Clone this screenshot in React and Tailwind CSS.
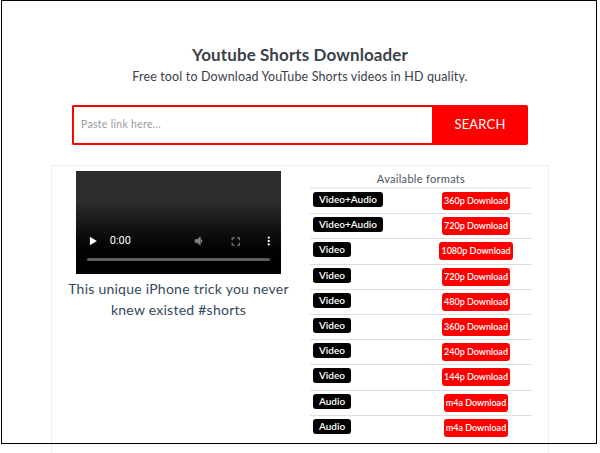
const formats = [
  { type: "Video+Audio", label: "360p Download" },
  { type: "Video+Audio", label: "720p Download" },
  { type: "Video", label: "1080p Download" },
  { type: "Video", label: "720p Download" },
  { type: "Video", label: "480p Download" },
  { type: "Video", label: "360p Download" },
  { type: "Video", label: "240p Download" },
  { type: "Video", label: "144p Download" },
  { type: "Audio", label: "m4a Download" },
  { type: "Audio", label: "m4a Download" },
];

const VideoPlayer = () => (
  <div className="w-[205px] h-[103px] bg-gradient-to-b from-[#2c2c2c] from-30% to-black flex flex-col justify-end px-[11px] pb-[13px]">
    <div className="flex items-center h-[16px] mb-[9px] text-white">
      <svg width="10" height="12" viewBox="0 0 10 12" className="ml-[2px]">
        <path d="M1 1 L9 6 L1 11 Z" fill="#fff" />
      </svg>
      <span className="ml-[12px] text-[11px] font-['Roboto',sans-serif]">0:00</span>
      <svg width="16" height="16" viewBox="0 0 24 24" className="ml-[62px]" fill="#808080">
        <path d="M3 9v6h4l6 5V4L7 9H3zm13 3a4.500 4.500 0 0 0-2.500-4v8a4.500 4.500 0 0 0 2.500-4z" />
      </svg>
      <svg width="11" height="11" viewBox="0 0 24 24" className="ml-[24px]" fill="none" stroke="#777" strokeWidth="3">
        <path d="M3 9V3h6M15 3h6v6M21 15v6h-6M9 21H3v-6" />
      </svg>
      <svg width="4" height="12" viewBox="0 0 4 12" className="ml-[26px]" fill="#fff">
        <circle cx="2" cy="2" r="1.300" />
        <circle cx="2" cy="6" r="1.300" />
        <circle cx="2" cy="10" r="1.300" />
      </svg>
    </div>
    <div className="h-[3px] rounded-full bg-[#5c5c5c]" />
  </div>
);

const App = () => {
  return (
    <div className="relative w-[600px] h-[453px] overflow-hidden bg-white font-['Lato',sans-serif] text-[#3a4149]">
      {/* screenshot frame */}
      <div className="absolute left-[1px] top-0 w-[596px] h-[444px] border border-black pointer-events-none" />

      <div className="pt-[45px] text-center">
        <h1 className="text-[17px] leading-[20px] font-bold tracking-[0.1px]">Youtube Shorts Downloader</h1>
        <p className="mt-[2px] text-[12.5px] leading-[20px] tracking-[0.15px]">
          Free tool to Download YouTube Shorts videos in HD quality.
        </p>
      </div>

      {/* Search */}
      <div className="flex w-[456px] h-[40px] ml-[72px] mt-[18px]">
        <div className="flex-1 flex items-center border-2 border-[#ff0000] border-r-0 rounded-l-[2px] pl-[7px] text-[10.5px] text-[#9a9a9a] tracking-[0.3px]">
          Paste link here...
        </div>
        <button className="w-[96px] bg-[#ff0000] text-white text-[13px] tracking-[0.2px] rounded-r-[2px]">SEARCH</button>
      </div>

      {/* Result card */}
      <div className="flex w-[498px] h-[300px] ml-[51px] mt-[20px] border border-[#eeeeee] border-b-0">
        <div className="w-[258px] pt-[5px] pl-[24px] shrink-0">
          <VideoPlayer />
          <p className="w-[230px] -ml-[12.5px] mt-[4px] text-center text-[14px] leading-[21px] tracking-[0.25px] text-[#34495e]">
            This unique iPhone trick you never knew existed #shorts
          </p>
        </div>

        <div className="w-[222px]">
          <div className="h-[23px] text-center text-[11px] leading-[25px] tracking-[0.3px] text-[#4a5560] border-b-2 border-[#eeeeee]">
            Available formats
          </div>
          {formats.map((f, i) => (
            <div
              key={i}
              className={`grid grid-cols-[110px_112px] items-start pt-[3px] h-[25.2px] ${i < formats.length - 1 ? "border-b border-[#dddddd]" : ""}`}
            >
              <div className="pl-[3px] flex">
                <span className="bg-black text-white text-[10px] leading-[15px] font-semibold px-[6px] rounded-[3px]">
                  {f.type}
                </span>
              </div>
              <div className="flex justify-center">
                <span className="bg-[#ff0000] text-white text-[9px] leading-[18px] font-semibold px-[2px] rounded-[3px]">
                  {f.label}
                </span>
              </div>
            </div>
          ))}
        </div>
      </div>
    </div>
  );
};

export default App;
